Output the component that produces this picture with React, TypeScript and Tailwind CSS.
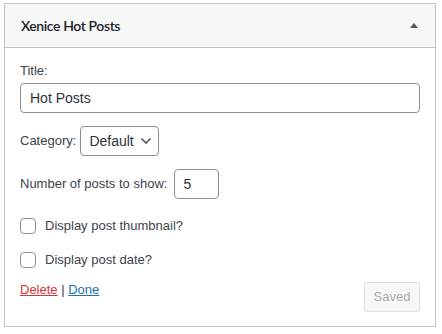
import React from "react";

export default function App() {
  const font = { fontFamily: '"Liberation Sans", Arial, sans-serif' };
  return (
    <div className="w-[442px] h-[334px] bg-white pt-[3px] pl-[4px]" style={font}>
      <div className="w-[432px] border border-[#c3c4c7] bg-white">
        <div className="h-[44px] bg-[#f6f7f7] border-b border-[#c3c4c7] flex items-center justify-between pl-[16px] pr-[17px]">
          <span className="text-[14px] font-semibold tracking-[-0.4px] text-[#1d2327]" style={{ fontFamily: 'Lato, "Liberation Sans", sans-serif' }}>Xenice Hot Posts</span>
          <svg width="8" height="6" viewBox="0 0 8 6"><path d="M4 0 L8 5 L0 5 Z" fill="#50575e" /></svg>
        </div>
        <div className="px-[15px] pt-[14px] pb-[14px] text-[13px] leading-[18px] text-[#3c434a]">
          <div className="leading-[18px]">Title:</div>
          <input
            readOnly
            value="Hot Posts"
            className="mt-[3px] w-[400px] h-[30px] border border-[#8c8f94] rounded-[4px] px-[9px] text-[14px] text-[#2c3338] outline-none block"
            style={font}
          />
          <div className="mt-[13px] flex items-center gap-[4px]">
            <span>Category:</span>
            <div className="h-[30px] border border-[#8c8f94] rounded-[4px] flex items-center pl-[8px] pr-[6px] gap-[6px] text-[14px] text-[#2c3338]">
              <span>Default</span>
              <svg width="12" height="8" viewBox="0 0 12 8"><path d="M1.5 1.5 L6 6 L10.5 1.5" fill="none" stroke="#50575e" strokeWidth="1.6" /></svg>
            </div>
          </div>
          <div className="mt-[13px] flex items-center gap-[7px]">
            <span>Number of posts to show:</span>
            <div className="w-[45px] h-[30px] border border-[#8c8f94] rounded-[4px] flex items-center pl-[8px] text-[14px] text-[#2c3338]">5</div>
          </div>
          <div className="mt-[18px] h-[18px] flex items-center gap-[9px]">
            <span className="w-[16px] h-[16px] border border-[#8c8f94] rounded-[4px] bg-white" />
            <span>Display post thumbnail?</span>
          </div>
          <div className="mt-[16px] h-[18px] flex items-center gap-[9px]">
            <span className="w-[16px] h-[16px] border border-[#8c8f94] rounded-[4px] bg-white" />
            <span>Display post date?</span>
          </div>
          <div className="mt-[12px] flex items-start justify-between">
            <div>
              <span className="text-[#d63638] underline">Delete</span>
              <span className="text-[#3c434a]"> | </span>
              <span className="text-[#2271b1] underline">Done</span>
            </div>
            <div className="mt-[1px] h-[30px] w-[56px] justify-center border border-[#dcdcde] rounded-[3px] bg-[#f6f7f7] text-[#a7aaad] flex items-center">Saved</div>
          </div>
        </div>
      </div>
    </div>
  );
}
